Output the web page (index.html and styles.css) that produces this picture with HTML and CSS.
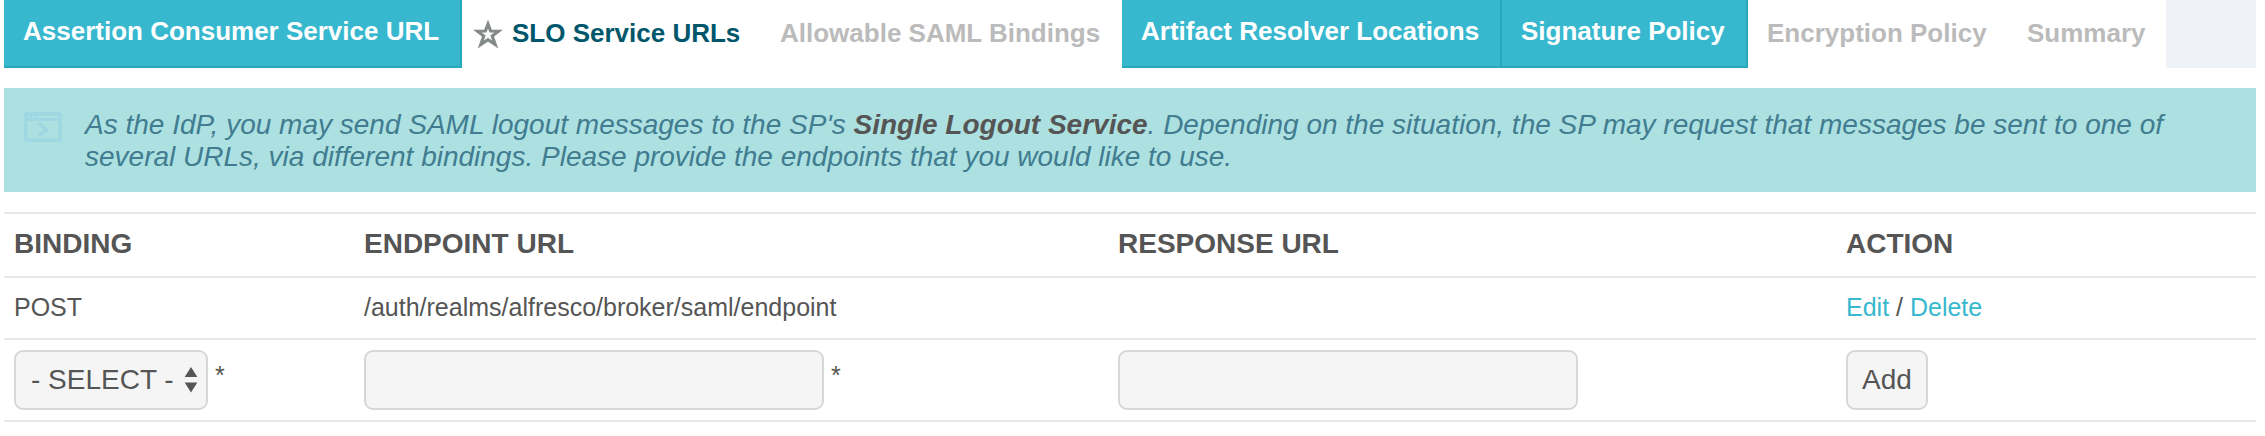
FILE: index.html
```html
<!DOCTYPE html>
<html lang="en">
<head>
<meta charset="utf-8">
<title>SLO Service URLs</title>
<link rel="stylesheet" href="styles.css">
</head>
<body>
<nav class="tabs">
  <a class="tab done tab-acs">Assertion Consumer Service URL</a>
  <a class="tab current tab-slo">
    <svg class="star" width="30" height="30" viewBox="0 0 30 30"><path d="M15 6 L17.6 13 L25.5 13.2 L19.2 18 L22.200 26.500 L15 21.600 L7.800 26.500 L10.800 18 L4.500 13.200 L12.400 13 Z"/></svg>
    <span>SLO Service URLs</span>
  </a>
  <a class="tab pending tab-bindings">Allowable SAML Bindings</a>
  <a class="tab done tab-artifact">Artifact Resolver Locations</a>
  <a class="tab done tab-signature">Signature Policy</a>
  <a class="tab pending tab-encryption">Encryption Policy</a>
  <a class="tab pending tab-summary">Summary</a>
</nav>
<section class="notice">
  <svg class="notice-icon" width="38" height="30" viewBox="0 0 38 30"><rect x="1.75" y="1.75" width="34.5" height="26.5" rx="1"/><path d="M2 6H36" stroke-width="6"/><path class="gap" d="M4 5h2M8 5h2M12 5h22"/><path d="M14.500 11.500l8 6.500-8 6.500" stroke-width="4"/></svg>
  <p class="notice-text">As the IdP, you may send SAML logout messages to the SP's <strong>Single Logout Service</strong>. Depending on the situation, the SP may request that messages be sent to one of several URLs, via different bindings. Please provide the endpoints that you would like to use.</p>
</section>
<table class="endpoints">
  <colgroup><col class="col-binding"><col class="col-endpoint"><col class="col-response"><col></colgroup>
  <thead>
    <tr><th>BINDING</th><th>ENDPOINT URL</th><th>RESPONSE URL</th><th>ACTION</th></tr>
  </thead>
  <tbody>
    <tr class="entry"><td>POST</td><td>/auth/realms/alfresco/broker/saml/endpoint</td><td></td><td><a class="link">Edit</a> / <a class="link">Delete</a></td></tr>
    <tr class="form">
      <td><div class="field"><div class="control select"><span>- SELECT -</span><svg width="14" height="26" viewBox="0 0 14 26"><path d="M7 0l6.3 10H.7zM7 25.500L.7 15.500h12.600z"/></svg></div><span class="required">*</span></div></td>
      <td><div class="field"><input class="control input" type="text"><span class="required">*</span></div></td>
      <td><div class="field"><input class="control input" type="text"></div></td>
      <td><div class="field"><button class="control add">Add</button></div></td>
    </tr>
  </tbody>
</table>
</body>
</html>
```
FILE: styles.css
```css
* { box-sizing: border-box; }
body {
  margin: 0 9px 0 4px;
  background: #fff;
  color: #555;
  font: 26px/30px "Liberation Sans", Arial, sans-serif;
}
.tabs {
  display: flex;
  height: 68px;
  background: #eff3f8;
  font-weight: bold;
  white-space: nowrap;
}
.tab { flex: none; padding: 16px 0 0 19px; background: #fff; }
.done {
  background: #37b8ce;
  color: #fff;
  border-right: 2px solid #27a8bb;
  border-bottom: 2px solid #27a8bb;
}
.current, .pending { padding-top: 18px; }
.current { display: flex; color: #00566b; padding-left: 11px; }
.pending { color: #bbb; }
.tab-acs { width: 458px; }
.tab-slo { width: 300px; }
.tab-bindings { width: 360px; padding-left: 18px; }
.tab-artifact { width: 380px; }
.tab-signature { width: 246px; }
.tab-encryption { width: 259px; }
.tab-summary { width: 159px; padding-left: 20px; }
.star { margin: 0 9px 0 0; fill: none; stroke: #858b8b; stroke-width: 3.2; }
.notice {
  display: flex;
  height: 104px;
  margin-top: 20px;
  padding: 21px 80px 0 20px;
  background: #ade1e1;
}
.notice-icon { flex: none; margin: 3px 23px 0 0; fill: none; stroke: #9fd8e2; stroke-width: 3.5; }
.notice-icon .gap { stroke: #ade1e1; stroke-width: 2; }
.notice-text { margin: 0; color: #417c90; font-size: 28px; line-height: 32px; font-style: italic; }
.notice-text strong { color: #555; }
.endpoints {
  width: 100%;
  margin-top: 20px;
  table-layout: fixed;
  border-spacing: 0;
  border-top: 2px solid #e7e7e7;
  font-size: 25px;
}
.col-binding { width: 350px; }
.col-endpoint { width: 754px; }
.col-response { width: 728px; }
.endpoints th, .endpoints td {
  padding: 14px 0 0 10px;
  border-bottom: 2px solid #e7e7e7;
  text-align: left;
  vertical-align: top;
}
.endpoints th { height: 64px; font-size: 28px; line-height: 32px; }
.entry td { height: 62px; }
.endpoints .form td { height: 82px; padding-top: 10px; }
.link { color: #37b8ce; }
.field { display: flex; }
.control {
  height: 60px;
  border: 2px solid #d7d7d7;
  border-radius: 9px;
  background: #f5f5f5;
  color: #555;
  font: 28px/32px "Liberation Sans", Arial, sans-serif;
}
.select { display: flex; width: 194px; padding: 12px 0 0 15px; white-space: nowrap; }
.select svg { margin: 3px 0 0 10px; fill: #555; }
.input { width: 460px; padding: 0 16px; }
.add { width: 82px; padding: 0; }
.required { margin: 10px 0 0 7px; }
```
